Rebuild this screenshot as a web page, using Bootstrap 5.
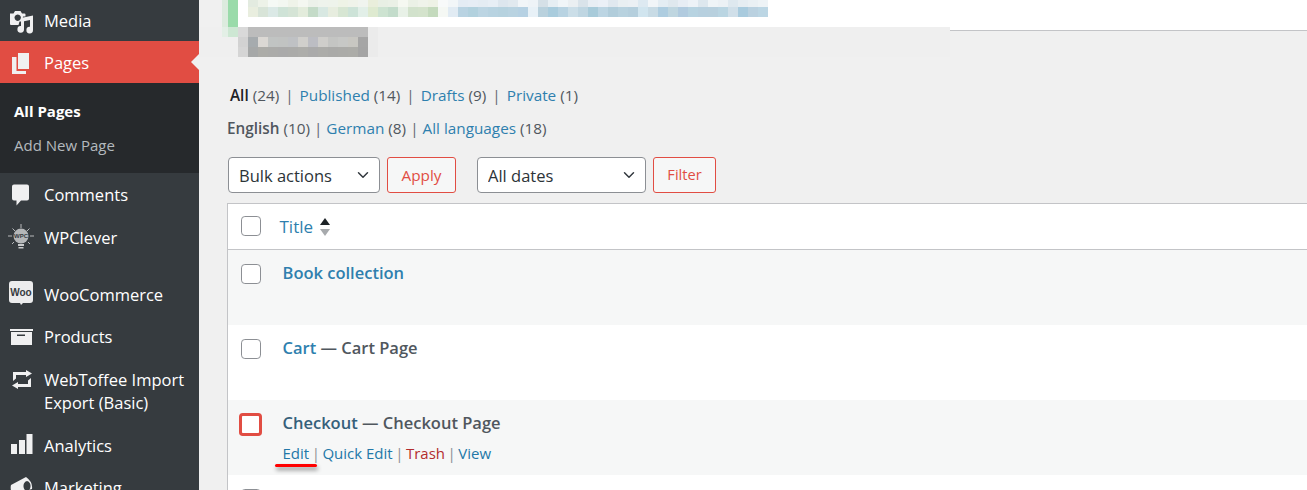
<!doctype html>
<html lang="en"><head><meta charset="utf-8"><title>Pages</title>
<link href="https://cdn.jsdelivr.net/npm/bootstrap@5.3.0/dist/css/bootstrap.min.css" rel="stylesheet">
<style>
html,body{height:490px;overflow:hidden}
body{font-family:"Open Sans","Noto Sans",sans-serif;background:#f0f0f0;color:#3c434a;font-size:15.3px}
.shell{height:490px;overflow:hidden}
.side{width:199px;background:#363b3f;flex:none;font-size:16.5px}
.mi{height:42px;color:#fff;padding-left:9px;gap:9px;white-space:nowrap}
.mi svg{width:26px;height:26px;flex:none;fill:#f0f0f1;overflow:visible}
.mi-media{height:41px;padding-top:1px}
.mi-cm,.mi-wp{height:43px;padding-top:1px}
.mi-woo{margin-top:15px}
.mi-tall{height:67px;align-items:flex-start!important;padding-top:10px;line-height:23px;white-space:normal}
.mi-tall svg{margin-top:-2px}
.mi-on{background:#e14d43;position:relative;padding-top:2px}
.mi-on::after{content:"";position:absolute;right:0;top:13px;border:8px solid transparent;border-right-color:#f0f0f0;border-left:0}
.subm{background:#26292c;height:90px;padding:11px 14px 0;font-size:15px}
.subm a{display:block;height:34px;line-height:34px;color:#b4b9be;text-decoration:none}
.subm a.cur{color:#fff;font-weight:700}
.maincol{min-width:0}
.blurpic{display:block;width:1108px;height:57px}
.inset{padding-left:28px}
.views{margin-top:28px;padding-left:3px;line-height:20px;white-space:nowrap}
.langs{margin-top:13px;line-height:20px;white-space:nowrap}
.now{color:#1d2327;font-weight:600}
.lnk{color:#2e7fae;text-decoration:none}
.cnt{color:#50575e}
.sep{color:#646970;margin:0 6px}
.views .sep:first-of-type{margin-right:7px}
.langs .now{color:#50575e}
.langs .sep{margin:0 4px}
.langs .sep:last-of-type{margin:0 6px}
.tools{margin-top:19px;height:36px;padding-left:1px}
.pick{width:auto;height:36px;font-size:16.5px;color:#2c3338;border-color:#8c8f94;border-radius:4px;padding:2px 24px 0 10px;background-position:right 8px center;font-family:inherit}
.pick-a{width:152px}
.pick-b{width:169px;margin-left:21px}
.redbtn{height:36px;padding:0;border:1px solid #e14d43;color:#e14d43;background:#f6f7f7;border-radius:3px;font-size:15.3px;margin-left:7px}
.redbtn-a{width:69px}
.redbtn-b{width:63px;font-size:14.6px}
.pagelist{margin:10px 0 0 -1px;width:1120px;border:1px solid #c3c4c7;border-right:0;border-bottom:0;table-layout:fixed;--bs-table-bg:transparent;background:#fff;position:relative;left:1px}
.pagelist td,.pagelist th{padding:0;border:0;vertical-align:top;color:#50575e;font-weight:400;box-shadow:none}
.pagelist th{height:46px;border-bottom:1px solid #c3c4c7;vertical-align:middle}
.pagelist td{height:75px;padding-top:11px}
.pagelist .zeb td{background:#f6f7f7}
.colc{width:53px;padding-left:13px!important}
.pagelist td.colc{padding-top:14px}
.tick{width:20px;height:20px;margin:0;border:1px solid #8c8f94;border-radius:4px;float:none;display:block}
th .tick{margin-top:-1px}
.tick-hot{width:23px;height:23px;border:3px solid #e14d43;border-radius:7px;margin:-1px 0 0 -2px;box-shadow:none}
.sorthead{font-size:17px;margin-left:-1px;gap:7px}
.sortarrows{gap:4px;width:10px}
.tri-up,.tri-dn{display:block;width:0;border-left:5px solid transparent;border-right:5px solid transparent}
.tri-up{border-bottom:7px solid #1d2327}
.tri-dn{border-top:7px solid #a7aaad}
.ttl{font-size:16.5px;line-height:24px;font-weight:600;margin-left:2px;color:#50575e}
.ttl a{color:#2e7fae;text-decoration:none}
.ttl a.dark{color:#35607a}
.acts{font-size:15px;line-height:22px;margin:7px 0 0 2px;white-space:nowrap;position:relative;color:#8c8f94}
.acts a{color:#2378a8;text-decoration:none}
.acts a.del{color:#b32d2e}
.acts .sep{margin:0 2.500px;color:#8c8f94}
.redmark{position:absolute;left:-8px;top:22px;width:42px;height:3px;background:#f00;border-radius:2px;box-shadow:1px 3px 4px rgba(0,0,0,.45)}
</style></head><body>
<div class="shell d-flex">
<nav class="side">
 <div class="mi mi-media d-flex align-items-center">
  <svg viewBox="0 0 26 26"><path fill-rule="evenodd" d="M1 5.500h3.500l1.500-2.500h5.500l1.500 2.500h2.500a1 1 0 0 1 1 1v2h-2.500l-.5 5h-3l-1 3.500h-7.500a1 1 0 0 1-1-1zM8.700 6.500a3.200 3.200 0 1 0 .01 0z"/><path d="M24 7.500v14.500a3.300 3.300 0 1 1-3-3.200v-6.800l-6 1.300v8a3.300 3.300 0 1 1-3-3.200v-8z"/></svg>
  <span>Media</span></div>
 <div class="mi mi-on d-flex align-items-center">
  <svg viewBox="0 0 26 26"><path d="M9 3h11v16h-11z"/><path d="M3 7h4.500v14h9.500v3h-14z"/></svg>
  <span>Pages</span></div>
 <div class="subm"><a class="cur" href="#">All Pages</a><a href="#">Add New Page</a></div>
 <div class="mi mi-cm d-flex align-items-center">
  <svg viewBox="0 0 26 26"><path d="M5 2.500h13a2 2 0 0 1 2 2v12a2 2 0 0 1-2 2h-6l-4.500 5v-5h-2.500a2 2 0 0 1-2-2v-12a2 2 0 0 1 2-2z"/></svg>
  <span>Comments</span></div>
 <div class="mi mi-wp d-flex align-items-center">
  <svg viewBox="0 0 26 26"><g fill="none" stroke="#b8babc" stroke-width="1"><path d="M12 -1v4M3.500 3.500l2.500 2.500M20.500 3.500l-2.500 2.500M-1 11h4M21 11h4M5 17l-2 2M19 17l2 2"/></g><circle cx="12" cy="11" r="7.500" fill="#b5b7b9"/><text x="12" y="13" font-size="6" font-weight="700" text-anchor="middle" fill="#363b3f" font-family="Liberation Sans,sans-serif">WPC</text><path fill="#c8cacc" d="M9 19h6v2h-6zM9.500 22h5v1.500h-5z"/></svg>
  <span>WPClever</span></div>
 <div class="mi mi-woo d-flex align-items-center">
  <svg viewBox="0 0 26 26"><path fill="#ececed" d="M3 -1h18a3 3 0 0 1 3 3v16a3 3 0 0 1-3 3h-7l-2 2-1-2h-8a3 3 0 0 1-3-3v-16a3 3 0 0 1 3-3z"/><text x="12" y="13.500" font-size="10" font-weight="700" text-anchor="middle" fill="#363b3f" font-family="Liberation Sans,sans-serif">Woo</text></svg>
  <span>WooCommerce</span></div>
 <div class="mi d-flex align-items-center">
  <svg viewBox="0 0 26 26"><path d="M1 5h23v2h-23z"/><path fill-rule="evenodd" d="M2 8h21v13h-21zM8 10.500v1.500h8v-1.500z"/></svg>
  <span>Products</span></div>
 <div class="mi mi-tall d-flex align-items-center">
  <svg viewBox="0 0 26 26"><path d="M17 4l6 3.500-6 3.500v-2h-10v3.500l-3 2.500v-9h13zM9 23l-6-3.500 6-3.500v2h10v-3.500l3-2.500v9h-13z"/></svg>
  <span>WebToffee Import Export (Basic)</span></div>
 <div class="mi d-flex align-items-center">
  <svg viewBox="0 0 26 26"><path d="M2 11h6v10h-6zM10 7h6v14h-6zM17.500 1h6v20h-6z"/></svg>
  <span>Analytics</span></div>
 <div class="mi d-flex align-items-center">
  <svg viewBox="0 0 26 26"><path fill-rule="evenodd" d="M2 10l15-8q7 5 6 12l-14 4h-6q-2-4-1-8zM18 6a3.500 5 0 1 0 .01 0z"/></svg>
  <span>Marketing</span></div>
</nav>
<main class="maincol flex-grow-1">
 <svg class="blurpic" id="blur" viewBox="199 0 1108 57" shape-rendering="crispEdges" role="img" aria-label="Blurred page notice"></svg>
 <div class="inset">
  <div class="views"><span class="now">All</span> <span class="cnt">(24)</span><span class="sep">|</span><a class="lnk" href="#">Published</a> <span class="cnt">(14)</span><span class="sep">|</span><a class="lnk" href="#">Drafts</a> <span class="cnt">(9)</span><span class="sep">|</span><a class="lnk" href="#">Private</a> <span class="cnt">(1)</span></div>
  <div class="langs"><span class="now">English</span> <span class="cnt">(10)</span><span class="sep">|</span><a class="lnk" href="#">German</a> <span class="cnt">(8)</span><span class="sep">|</span><a class="lnk" href="#">All languages</a> <span class="cnt">(18)</span></div>
  <div class="tools d-flex">
   <select class="form-select pick pick-a"><option>Bulk actions</option></select>
   <button class="btn redbtn redbtn-a">Apply</button>
   <select class="form-select pick pick-b"><option>All dates</option></select>
   <button class="btn redbtn redbtn-b">Filter</button>
  </div>
  <table class="table mb-0 pagelist">
   <thead><tr><th class="colc"><input class="form-check-input tick" type="checkbox"></th><th><div class="d-flex align-items-center sorthead"><a class="lnk" href="#">Title</a><span class="d-flex flex-column sortarrows"><i class="tri-up"></i><i class="tri-dn"></i></span></div></th></tr></thead>
   <tbody>
    <tr class="zeb"><td class="colc"><input class="form-check-input tick" type="checkbox"></td><td><div class="ttl"><a href="#">Book collection</a></div></td></tr>
    <tr><td class="colc"><input class="form-check-input tick" type="checkbox"></td><td><div class="ttl"><a href="#">Cart</a> — Cart Page</div></td></tr>
    <tr class="zeb"><td class="colc"><input class="form-check-input tick tick-hot" type="checkbox"></td><td><div class="ttl"><a class="dark" href="#">Checkout</a> — Checkout Page</div><div class="acts"><a href="#">Edit</a><span class="sep">|</span><a href="#">Quick Edit</a><span class="sep">|</span><a class="del" href="#">Trash</a><span class="sep">|</span><a href="#">View</a><span class="redmark"></span></div></td></tr>
    <tr><td class="colc"><input class="form-check-input tick" type="checkbox"></td><td></td></tr>
   </tbody>
  </table>
 </div>
</main>
</div>
<script>
(function(){
 var s=document.getElementById('blur'),out='';
 function r(x,y,w,h,c){out+='<rect x="'+x+'" y="'+y+'" width="'+w+'" height="'+h+'" fill="#'+c+'"/>';}
 r(238,0,712,27,'ffffff');r(950,0,357,30,'ffffff');r(950,30,357,1,'c3c4c7');r(199,27,751,30,'efefef');r(199,0,23,27,'f0f0f0');
 r(222,0,6,27,'dcebde');r(228,0,10,27,'9adbaa');r(222,27,6,10,'e3efe6');r(228,27,10,10,'cde7d3');
 var a='e3ebe0 edf2e8 f5f9f5 f3f7f1 eff3e9 f4f7f1 ecf1ea eef3ec eef3eb eef3e6 eff3ea f0f4ef e9eedb e8efe4 eaf0e6 f5f8f1 ebf1e6 eff3ea eef2e6 f8fafa f2f6f8 e4ecf4 e6edf5 e4ecf3 e7eef5 dde6ee e1e9ef f1f5f8 eef3f7 d5e0e7 e6eef3 f0f5f8 eaeff2 d9e3ea e8eef4 ebf0f7 e0e8ef e9eff2 ebf0f4 dde9f1 f1f5f8 e4edf3 dfe8ee e7edf4 edf2f7 dde7ee eff4f7 ecf1f5 dee8ef e6edf2 eaf0f4 eef3f6'.split(' ');
 var b='e9eedf d8e4d8 dbe9e6 cfe3d7 d5e4d6 e3ecdc c4dbc8 d8e8e2 e7eddf d7e6d3 cde3d8 e2efe8 deead0 cde3d1 c3dccb e8f1e7 d2e2cc d4e3cc c4dabd f5f8f4 e1ebf3 b9d3e2 b2d1de bcd5e3 b8d3e1 b6d2df b9d3e1 b6d1e3 e8f1f7 b9d1dd a9ccdd b8d3e2 cbdee8 bfd6e2 a8cbda bcd5e3 b1cddb b8d2df b5cfdd d1e5ef c8dbe5 aecde0 bfd6e0 b1cbdf b7d3e1 b7d0df b8d0de bad5e2 d0dfe9 a9cbde bad1e0 bcd6e4'.split(' ');
 a.forEach(function(c,i){r(248+i*10,0,10,7,c);});
 b.forEach(function(c,i){r(248+i*10,7,10,10,c);});
 r(238,27,10,10,'d9d9d9');r(248,27,120,10,'bcbcbc');r(368,27,10,30,'ebebeb');r(238,37,10,10,'d2d2d2');r(238,47,10,10,'d5d5d5');
 'a6abae dbd8d4 c1c4c3 c1c3c2 bfc1c4 d0cfcc bcbdc3 cfcecb c4c5c3 c7c8c6 c8c7c2 a5a5a5'.split(' ').forEach(function(c,i){r(248+i*10,37,10,10,c);});
 'a6a8a8 acaca8 ababa9 aaaaaa ababa9 adadaa aaaaaa acaca9 aaaaa8 ababa8 acaca8 a4a4a4'.split(' ').forEach(function(c,i){r(248+i*10,47,10,10,c);});
 s.innerHTML=out;
})();
</script>
</body></html>
